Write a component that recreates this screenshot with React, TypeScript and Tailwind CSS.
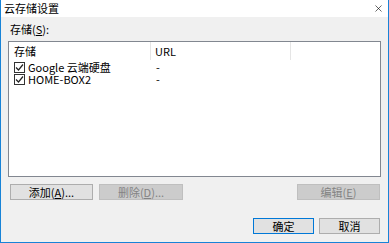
import { X } from 'lucide-react';

const font = { fontFamily: '"Noto Sans CJK SC", "Liberation Sans", sans-serif' };

function Check() {
  return (
    <span className="w-[11px] h-[11px] border border-[#333] bg-white flex items-center justify-center mr-[3px]">
      <svg width="9" height="9" viewBox="0 0 9 9">
        <path d="M1 4.5 L3.5 7 L8 1.5" fill="none" stroke="#222" strokeWidth="1.2" />
      </svg>
    </span>
  );
}

function Btn({ children, disabled, primary, w }: { children: React.ReactNode; disabled?: boolean; primary?: boolean; w: string }) {
  return (
    <button
      className={
        'h-[16px] flex items-center justify-center text-[11px] leading-none border ' +
        w +
        (disabled
          ? ' bg-[#cccccc] border-[#bfbfbf] text-[#838383]'
          : primary
          ? ' bg-[#e1e1e1] border-[#0078d7] text-black'
          : ' bg-[#e1e1e1] border-[#adadad] text-black')
      }
    >
      {children}
    </button>
  );
}

export default function App() {
  return (
    <div style={font} className="w-[389px] h-[243px] flex flex-col bg-[#f0f0f0] border-x border-b border-[#1883d7] text-black">
      <div className="h-[17px] bg-white flex items-center justify-between pl-[3px] pr-[4px]">
        <span className="text-[11px] leading-none">云存储设置</span>
        <X size={11} strokeWidth={1.3} className="text-black" />
      </div>
      <div className="flex flex-col px-[7px] pt-[7px]">
        <div className="text-[11px] leading-none h-[17px] pl-[2px]">
          存储(<span className="underline">S</span>):
        </div>
        <div className="h-[136px] bg-white border border-[#828790] flex flex-col">
          <div className="h-[18px] flex text-[11px] leading-none">
            <div className="w-[142px] border-r border-[#e5e5e5] flex items-center pl-[5px]">存储</div>
            <div className="w-[140px] border-r border-[#e5e5e5] flex items-center pl-[4px]">URL</div>
            <div className="flex-1" />
          </div>
          <div className="flex text-[11px] leading-none h-[13px] items-center pt-[1px]">
            <div className="w-[143px] flex items-center pl-[5px]">
              <Check />
              Google 云端硬盘
            </div>
            <div className="pl-[4px]">-</div>
          </div>
          <div className="flex text-[11px] leading-none h-[13px] items-center">
            <div className="w-[143px] flex items-center pl-[5px]">
              <Check />
              HOME-BOX2
            </div>
            <div className="pl-[4px]">-</div>
          </div>
        </div>
        <div className="flex mt-[7px] pl-[2px] pr-[1px]">
          <Btn w="w-[83px]">
            添加(<span className="underline">A</span>)...
          </Btn>
          <div className="ml-[6px]">
            <Btn w="w-[84px]" disabled>
              删除(<span className="underline">D</span>)...
            </Btn>
          </div>
          <div className="ml-auto">
            <Btn w="w-[83px]" disabled>
              编辑(<span className="underline">E</span>)
            </Btn>
          </div>
        </div>
        <div className="flex justify-end mt-[18px] pr-[1px] gap-[5px]">
          <Btn w="w-[61px]" primary>
            确定
          </Btn>
          <Btn w="w-[61px]">取消</Btn>
        </div>
      </div>
    </div>
  );
}
